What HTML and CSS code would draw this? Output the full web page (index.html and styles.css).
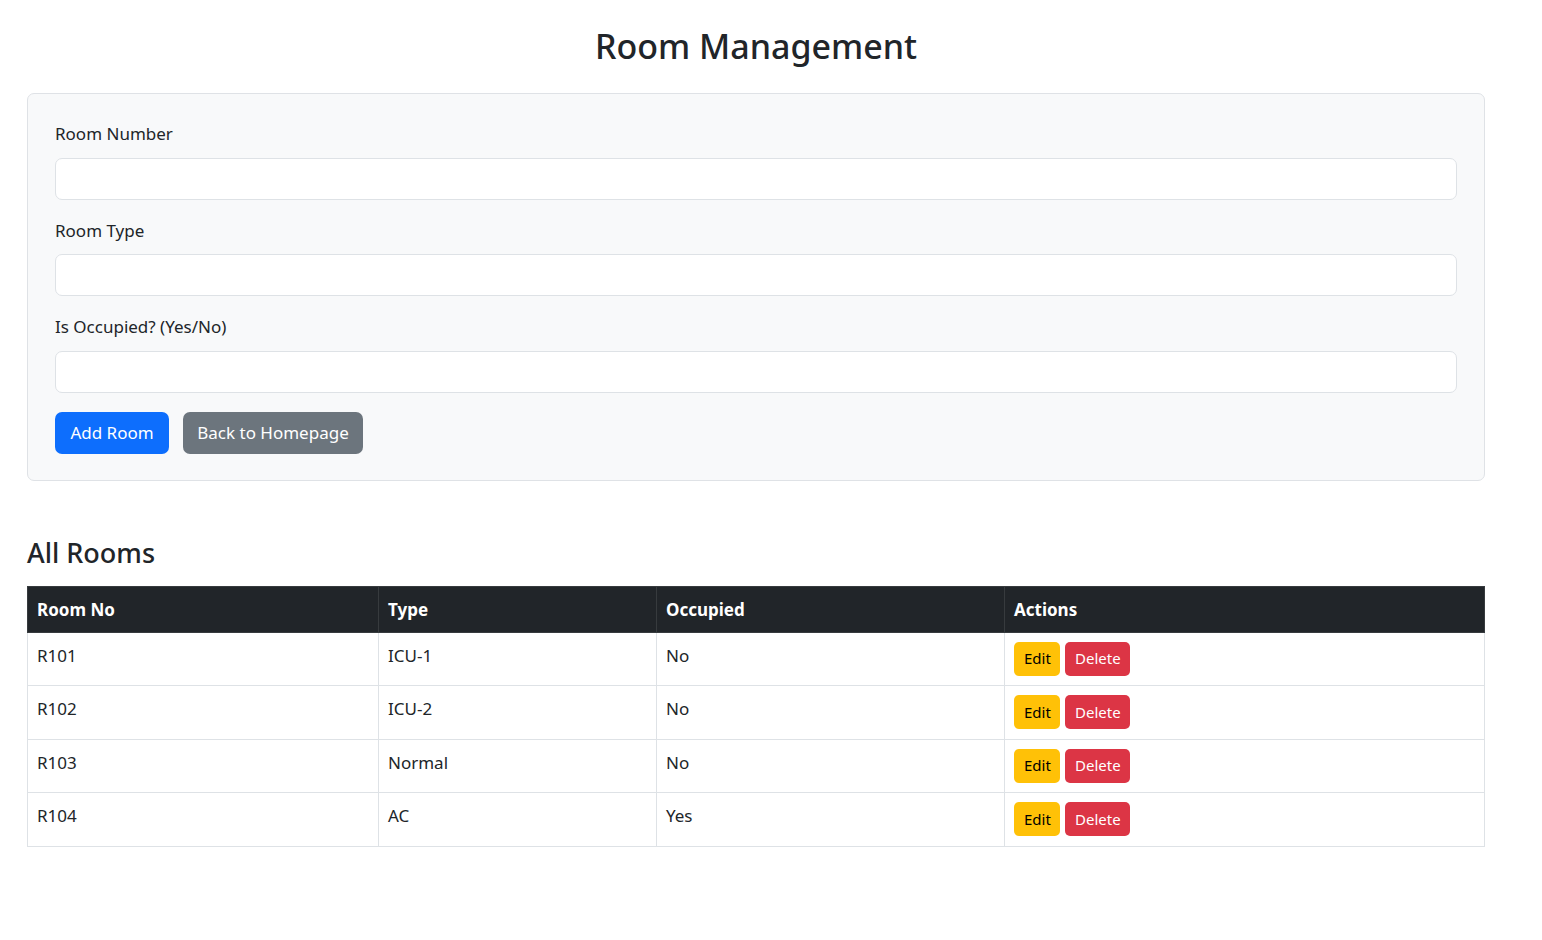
FILE: index.html
```html
<!DOCTYPE html>
<html lang="en">
<head>
<meta charset="utf-8">
<title>Room Management</title>
<link rel="stylesheet" href="styles.css">
</head>
<body>
<div class="container">
  <h2 class="page-title">Room Management</h2>
  <form class="card">
    <div class="field">
      <label class="label">Room Number</label>
      <input class="input" type="text">
    </div>
    <div class="field">
      <label class="label">Room Type</label>
      <input class="input" type="text">
    </div>
    <div class="field">
      <label class="label">Is Occupied? (Yes/No)</label>
      <input class="input" type="text">
    </div>
    <div class="actions">
      <button class="btn btn-primary" type="button">Add Room</button>
      <button class="btn btn-secondary" type="button">Back to Homepage</button>
    </div>
  </form>

  <h3 class="section-title">All Rooms</h3>
  <table class="table">
    <thead>
      <tr><th class="c1">Room No</th><th class="c2">Type</th><th class="c3">Occupied</th><th class="c4">Actions</th></tr>
    </thead>
    <tbody>
      <tr><td>R101</td><td>ICU-1</td><td>No</td><td><span class="row-btns"><button class="btn-sm btn-warning">Edit</button><button class="btn-sm btn-danger">Delete</button></span></td></tr>
      <tr><td>R102</td><td>ICU-2</td><td>No</td><td><span class="row-btns"><button class="btn-sm btn-warning">Edit</button><button class="btn-sm btn-danger">Delete</button></span></td></tr>
      <tr><td>R103</td><td>Normal</td><td>No</td><td><span class="row-btns"><button class="btn-sm btn-warning">Edit</button><button class="btn-sm btn-danger">Delete</button></span></td></tr>
      <tr><td>R104</td><td>AC</td><td>Yes</td><td><span class="row-btns"><button class="btn-sm btn-warning">Edit</button><button class="btn-sm btn-danger">Delete</button></span></td></tr>
    </tbody>
  </table>
</div>
</body>
</html>
```

FILE: styles.css
```css
* { box-sizing: border-box; }
html, body { margin: 0; padding: 0; background: #fff; }
body {
  font-family: "Noto Sans", "Open Sans", sans-serif;
  font-size: 17px;
  line-height: 1.5;
  color: #212529;
}
.container {
  width: 1458px;
  margin-left: 27px;
  padding-top: 25px;
}
.page-title {
  margin: 0 0 26px;
  text-align: center;
  font-size: 34px;
  font-weight: 500;
  line-height: 42px;
}
.card {
  display: flex;
  flex-direction: column;
  background: #f8f9fa;
  border: 1px solid #dfe2e6;
  border-radius: 7px;
  padding: 28px 27px 26px;
}
.field { display: flex; flex-direction: column; margin-bottom: 19px; }
.label { line-height: 24.5px; margin-bottom: 11px; }
.input {
  height: 42px;
  border: 1px solid #dee2e6;
  border-radius: 7px;
  background: #fff;
  font: inherit;
  padding: 6px 13px;
}
.actions { display: flex; gap: 14px; }
.btn {
  height: 42px;
  font: inherit;
  border: 1px solid transparent;
  border-radius: 7px;
  padding: 0 13px;
  color: #fff;
  line-height: 1;
}
.btn-primary { background: #0d6efd; width: 114px; }
.btn-secondary { background: #6c757d; width: 180px; }

.section-title {
  margin: 57px 0 18px;
  font-size: 27px;
  font-weight: 500;
  line-height: 30px;
}
.table {
  width: 1457px;
  border-collapse: collapse;
  table-layout: fixed;
}
.table th, .table td {
  border: 1px solid #dee2e6;
  padding: 9px 9px;
  text-align: left;
  vertical-align: top;
}
.table th {
  background: #212529;
  color: #fff;
  border-color: #373b3e;
  font-weight: 700;
  height: 46px;
  line-height: 26px;
  padding-top: 10px;
}
.table td { height: 53.5px; line-height: 26px; padding-top: 10px; }
.c1 { width: 351px; }
.c2 { width: 278px; }
.c3 { width: 348px; }
.c4 { width: 480px; }
.row-btns { display: flex; gap: 5px; margin-top: -1px; }
.btn-sm {
  height: 34px;
  font-family: inherit;
  font-size: 15px;
  border: 1px solid transparent;
  border-radius: 5px;
  padding: 0 9px;
  line-height: 1;
}
.btn-warning { background: #ffc107; color: #000; width: 46px; }
.btn-danger { background: #dc3545; color: #fff; width: 65px; }
```
